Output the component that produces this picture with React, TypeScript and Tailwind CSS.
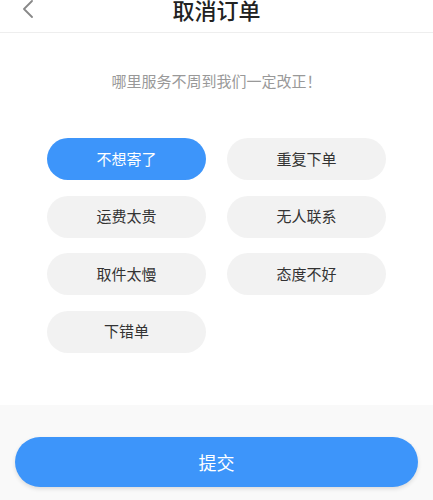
import React, { useState } from 'react';

const reasons = ['不想寄了', '重复下单', '运费太贵', '无人联系', '取件太慢', '态度不好', '下错单'];

const App: React.FC = () => {
    const [selected, setSelected] = useState(0);

    return (
        <div className="w-full min-h-[500px] flex flex-col bg-white overflow-hidden font-['Noto_Sans_CJK_SC',sans-serif]">
            <div className="bg-white h-[405px] flex flex-col">
                {/* header, top part cut off in the shot */}
                <div className="-mt-[14px] h-[47px] flex items-center border-b border-[#eeeeee]">
                    <div className="w-[60px] pl-[21px] flex items-center">
                        <svg width="13" height="20" viewBox="0 0 13 20" fill="none">
                            <path d="M11 2 L3 10 L11 18" stroke="#888888" strokeWidth="1.8" strokeLinecap="round" strokeLinejoin="round" />
                        </svg>
                    </div>
                    <h1 className="flex-1 text-center text-[22px] leading-none text-[#222222] font-medium">取消订单</h1>
                    <div className="w-[60px]" />
                </div>

                <p className="mt-[37px] text-center text-[15px] leading-[21px] text-[#999999]">哪里服务不周到我们一定改正！</p>

                <div className="mt-[47px] px-[47px] grid grid-cols-2 gap-x-[21px] gap-y-[15.5px]">
                    {reasons.map((r, i) => (
                        <button
                            key={r}
                            onClick={() => setSelected(i)}
                            className={`h-[42px] rounded-full text-[15px] ${selected === i ? 'bg-[#3d95fa] text-white' : 'bg-[#f2f2f2] text-[#333333]'}`}
                        >
                            {r}
                        </button>
                    ))}
                </div>
            </div>

            <div className="flex-1 bg-[#f9f9f9] px-[15px] pt-[32px] pb-[20px]">
                <button className="w-full h-[50px] rounded-full bg-[#3d95fa] text-white text-[18px] shadow-[0_2px_4px_rgba(0,0,0,0.12)]">
                    提交
                </button>
            </div>
        </div>
    );
};

export default App;
